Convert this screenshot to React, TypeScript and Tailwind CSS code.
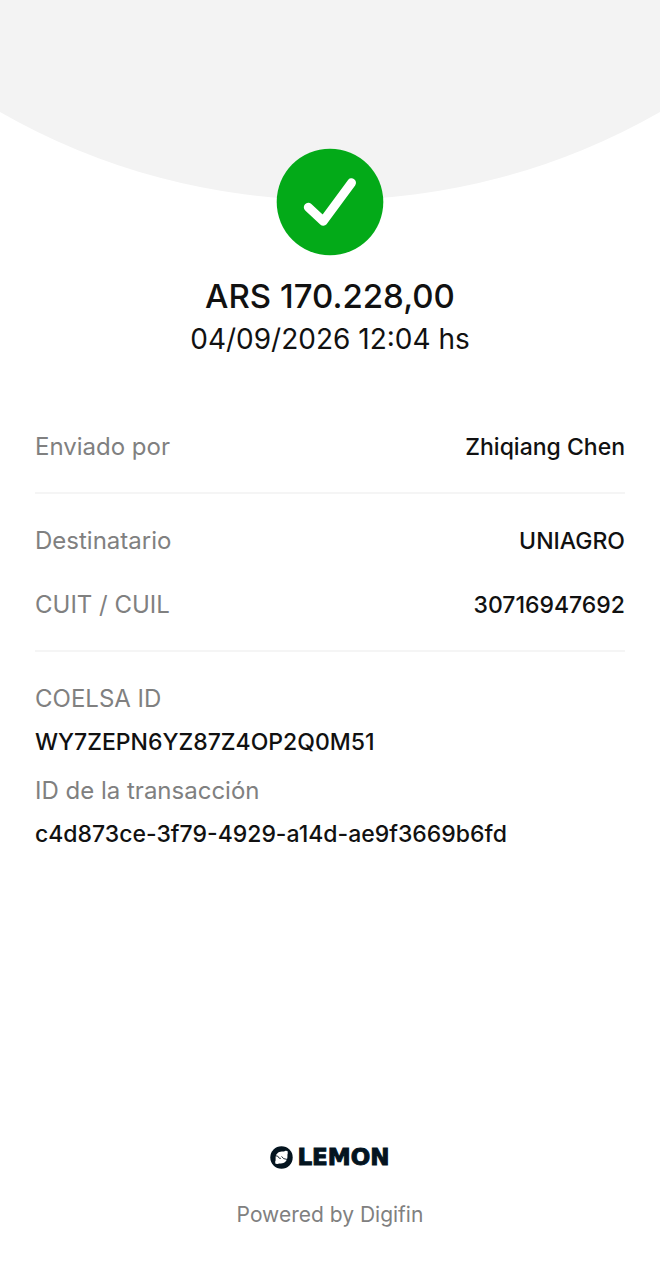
const HeaderArc = () => (
  <svg
    className="absolute inset-x-0 top-0 h-[200px] w-full"
    viewBox="0 0 660 200"
    preserveAspectRatio="none"
    aria-hidden="true"
  >
    <path d="M0 0H660V112A663 663 0 0 1 0 112Z" fill="#f3f3f3" />
  </svg>
);

const SuccessIcon = () => (
  <svg className="relative size-[108px]" viewBox="0 0 108 108" role="img" aria-label="Transferencia exitosa">
    <circle cx="54" cy="54" r="53.3" fill="#03aa18" />
    <path
      d="M32.3 59.2L47.3 73.2L75.5 34.8"
      fill="none"
      stroke="#fff"
      strokeWidth="9"
      strokeLinecap="round"
      strokeLinejoin="round"
    />
  </svg>
);

const LemonMark = () => (
  <svg className="size-[23px]" viewBox="0 0 23 23" aria-hidden="true">
    <circle cx="11.5" cy="11.5" r="11.2" fill="#04141f" />
    <path
      d="M5.6 12.2C5.4 8.4 8.3 5.6 11.8 5.6C13.4 5.6 14.2 5.6 15.4 4.8L17.5 5L17.8 7.2C17.2 8.6 17.6 9.8 17.4 11.2C17.2 14.8 14.4 17.4 10.9 17.4C9.6 17.4 8.8 17.4 7.4 18.1L5.5 17.8L5.1 15.8C5.8 14.6 5.6 13.5 5.6 12.2Z"
      fill="#fff"
    />
    <path
      d="M5.6 9.8L7.8 10.2L9.2 12.2L10.8 12.4M11.6 10.4L13.6 12.6L17 13.4"
      fill="none"
      stroke="#04141f"
      strokeWidth="0.9"
    />
  </svg>
);

type RowProps = { label: string; value: string };

const Row = ({ label, value }: RowProps) => (
  <div className="flex items-center justify-between gap-4">
    <dt className="text-[#808080]">{label}</dt>
    <dd className="text-right text-[23px] font-medium">{value}</dd>
  </div>
);

const StackedRow = ({ label, value }: RowProps) => (
  <div>
    <dt className="text-[#808080]">{label}</dt>
    <dd className="mt-[11px] text-[23px] font-medium break-words">{value}</dd>
  </div>
);

const App = () => {
  const recipient = [
    { label: "Destinatario", value: "UNIAGRO" },
    { label: "CUIT / CUIL", value: "30716947692" },
  ];

  const ids = [
    { label: "COELSA ID", value: "WY7ZEPN6YZ87Z4OP2Q0M51" },
    { label: "ID de la transacción", value: "c4d873ce-3f79-4929-a14d-ae9f3669b6fd" },
  ];

  return (
    <main className="flex min-h-screen flex-col bg-white font-['Inter',sans-serif] text-[#111]">
      <header className="relative flex flex-col items-center pt-[148px] text-center">
        <HeaderArc />
        <SuccessIcon />
        <h1 className="mt-5 text-[33px] leading-10 font-medium">ARS 170.228,00</h1>
        <p className="mt-[5px] text-[28px] leading-9">04/09/2026 12:04 hs</p>
      </header>

      <dl className="mt-[74px] px-[35px] text-2xl leading-8">
        <div className="border-b-2 border-[#f5f5f5] pb-[29px]">
          <Row label="Enviado por" value="Zhiqiang Chen" />
        </div>
        <div className="flex flex-col gap-8 border-b-2 border-[#f5f5f5] pt-[31px] pb-[29px]">
          {recipient.map((item) => (
            <Row key={item.label} {...item} />
          ))}
        </div>
        <div className="flex flex-col gap-[17px] pt-[31px]">
          {ids.map((item) => (
            <StackedRow key={item.label} {...item} />
          ))}
        </div>
      </dl>

      <footer className="mt-auto flex flex-col items-center pt-10 pb-[51px]">
        <div className="flex items-center gap-1 text-[#04141f]">
          <LemonMark />
          <span className="font-['DejaVu_Sans',sans-serif] text-[23px] leading-6 font-bold [-webkit-text-stroke:1px_#04141f]">
            LEMON
          </span>
        </div>
        <p className="mt-8 text-[21px] leading-7 text-[#808080]">Powered by Digifin</p>
      </footer>
    </main>
  );
};

export default App;
